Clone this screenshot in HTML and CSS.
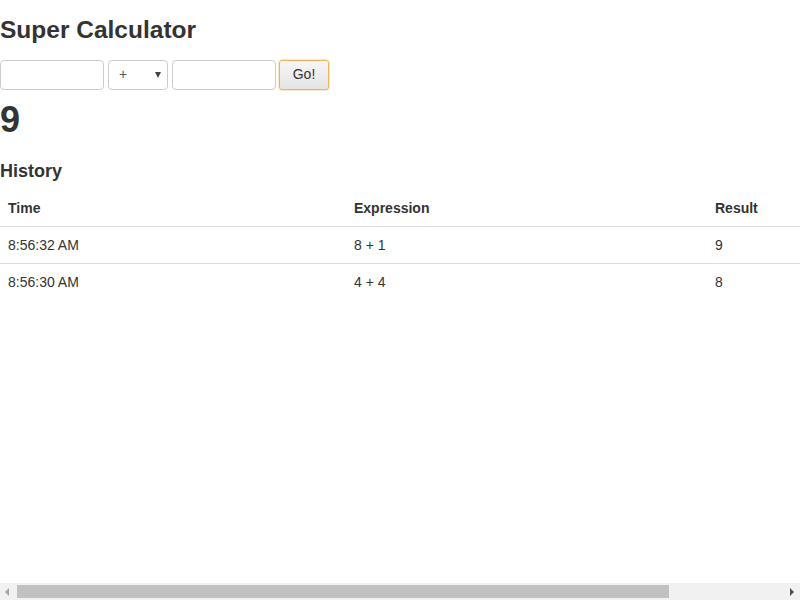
FILE: index.html
```
<!DOCTYPE html>
<html>
<head>
<meta charset="utf-8">
<title>Super Calculator</title>
<link rel="stylesheet" href="styles.css">
</head>
<body>
<div class="page">
  <h2 class="title">Super Calculator</h2>
  <form class="calc">
    <input class="field" type="text">
    <span class="select-wrap">
      <select class="op"><option>+</option><option>-</option><option>*</option><option>/</option></select>
      <span class="arrow"></span>
    </span>
    <input class="field" type="text">
    <button class="go" type="button">Go!</button>
  </form>
  <h1 class="result">9</h1>
  <h4 class="history-title">History</h4>
  <table class="history">
    <thead>
      <tr><th class="c-time">Time</th><th class="c-expr">Expression</th><th class="c-res">Result</th></tr>
    </thead>
    <tbody>
      <tr><td>8:56:32 AM</td><td>8 + 1</td><td>9</td></tr>
      <tr><td>8:56:30 AM</td><td>4 + 4</td><td>8</td></tr>
    </tbody>
  </table>
</div>
<div class="hscroll">
  <span class="sb-btn sb-left"></span>
  <span class="sb-track"><span class="sb-thumb"></span></span>
  <span class="sb-btn sb-right"></span>
</div>
</body>
</html>
```
FILE: styles.css
```
html, body {
  margin: 0;
  padding: 0;
  overflow: hidden;
  background: #fff;
}
body {
  font-family: "Liberation Sans", Arial, sans-serif;
  font-size: 14px;
  line-height: 1.42857;
  color: #333;
}
.page {
  display: flex;
  flex-direction: column;
  align-items: stretch;
}
.title {
  font-size: 24.5px;
  font-weight: bold;
  line-height: 27px;
  margin: 16px 0 17px 0;
}
.calc {
  display: flex;
  gap: 4px;
  height: 30px;
  margin: 0;
}
.field {
  box-sizing: border-box;
  width: 104px;
  height: 30px;
  border: 1px solid #ccc;
  border-radius: 4px;
  padding: 6px 12px;
  font: inherit;
  color: #555;
  background: #fff;
  margin: 0;
}
.select-wrap {
  position: relative;
  display: inline-flex;
}
.op {
  box-sizing: border-box;
  width: 60px;
  height: 30px;
  border: 1px solid #ccc;
  border-radius: 4px;
  padding: 0 10px;
  font: inherit;
  color: #555;
  background: #fff;
  -webkit-appearance: none;
  appearance: none;
  margin: 0;
}
.arrow {
  position: absolute;
  right: 7px;
  top: 12px;
  width: 0;
  height: 0;
  border-left: 3px solid transparent;
  border-right: 3px solid transparent;
  border-top: 6px solid #444;
  pointer-events: none;
}
.go {
  box-sizing: border-box;
  width: 50px;
  height: 30px;
  margin-left: -1px;
  border: 1px solid #ecb45a;
  border-radius: 3px;
  background: linear-gradient(#f7f7f7, #e4e4e4);
  font: inherit;
  color: #333;
  padding: 0;
  box-shadow: 0 0 0 1px rgba(240, 190, 100, 0.35);
}
.result {
  font-size: 36px;
  font-weight: bold;
  line-height: 40px;
  margin: 10px 0 0 0;
}
.history-title {
  font-size: 18px;
  font-weight: bold;
  line-height: 20px;
  margin: 21px 0 9px 0;
}
.history {
  width: 100%;
  border-collapse: collapse;
  border-spacing: 0;
  table-layout: fixed;
}
.history th, .history td {
  padding: 8px;
  text-align: left;
  vertical-align: top;
  line-height: 20px;
}
.history th {
  font-weight: bold;
  font-size: 14px;
}
.history td {
  border-top: 1px solid #ddd;
}
.c-time { width: 330px; }
.c-expr { width: 345px; }
.hscroll {
  position: fixed;
  left: 0;
  bottom: 0;
  width: 100%;
  height: 17px;
  background: #f1f1f1;
  display: flex;
}
.sb-btn {
  width: 17px;
  height: 17px;
  flex: none;
  position: relative;
}
.sb-left::after {
  content: "";
  position: absolute;
  left: 5px;
  top: 5px;
  border-right: 4px solid #a3a3a3;
  border-top: 4px solid transparent;
  border-bottom: 4px solid transparent;
}
.sb-right::after {
  content: "";
  position: absolute;
  left: 7px;
  top: 5px;
  border-left: 4px solid #505050;
  border-top: 4px solid transparent;
  border-bottom: 4px solid transparent;
}
.sb-track {
  flex: 1;
  display: flex;
  align-items: center;
}
.sb-thumb {
  width: 652px;
  height: 13px;
  background: #c1c1c1;
}
```
